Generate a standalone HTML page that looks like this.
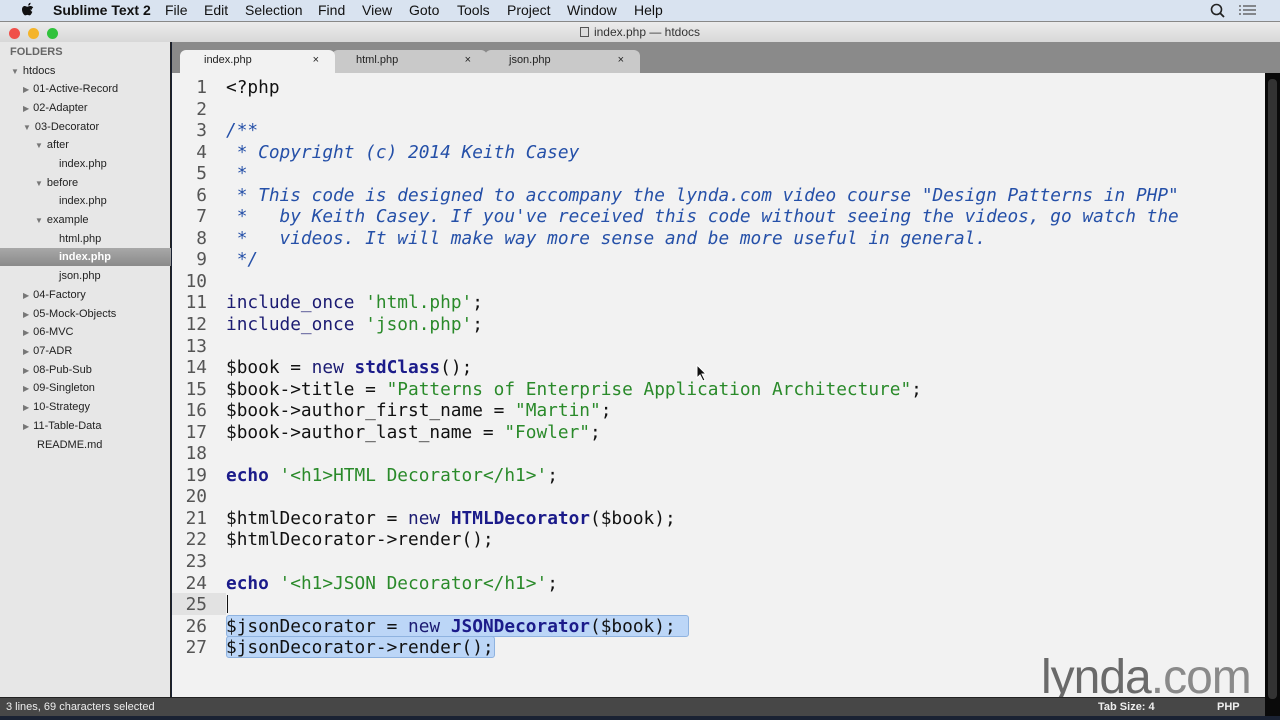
<!DOCTYPE html>
<html><head><meta charset="utf-8"><style>
*{margin:0;padding:0;box-sizing:border-box}
body{width:1280px;height:720px;overflow:hidden;background:#1a2233;font-family:"Liberation Sans",sans-serif;position:relative}
#menu{position:absolute;left:0;top:0;width:1280px;height:21px;background:#d9e3f0;font-size:14px;color:#111}
#menu span{position:absolute;top:2px}
#title{position:absolute;left:0;top:21px;width:1280px;height:21px;background:linear-gradient(#ececec,#d8d8d8);border-top:1px solid #888;font-size:12px;color:#333;text-align:center;line-height:21px}
.dot{position:absolute;top:6px;width:11px;height:11px;border-radius:50%}
#side{position:absolute;left:0;top:42px;width:171px;height:655px;background:#e7e7e7;border-right:1px solid #222;font-size:11px;color:#222}
#side div{position:absolute;height:18.7px;line-height:20px;white-space:nowrap}
.tri{color:#777;font-size:8px;margin-right:4px}
#tabs{position:absolute;left:172px;top:42px;width:1108px;height:31px;background:#8a8a8a}
.tab{position:absolute;top:8px;height:23px;width:155px;border-radius:6px 6px 0 0;font-size:11px;line-height:20px;padding-left:24px;color:#222}
.tab b{position:absolute;right:16px;font-weight:normal;font-size:11px}
#ed{position:absolute;left:172px;top:73px;width:1093px;height:624px;background:#f2f2f2}
#scroll{position:absolute;left:1265px;top:73px;width:15px;height:643px;background:#0a0a0a}
#scroll i{position:absolute;left:3px;top:6px;width:9px;height:620px;background:#333;border-radius:4px}
.ln{position:absolute;left:176px;width:31px;text-align:right;font:17.8px/21.55px "DejaVu Sans Mono",monospace;color:#555}
.cd{position:absolute;left:226px;font:17.8px/21.55px "DejaVu Sans Mono",monospace;color:#111;white-space:pre}
.c{color:#2550a8;font-style:italic}.s{color:#2a8a2a}.k{color:#1b1b72}.b{color:#1b1b8a;font-weight:bold}
#status{position:absolute;left:0;top:697px;width:1265px;height:19px;background:#474747;border-top:1px solid #222;color:#eee;font-size:11px;line-height:19px}
.sel{position:absolute;background:#bcd6f7;border:1px solid #8fb3e0;border-radius:3px}
</style></head><body>
<div id="menu">
<svg style="position:absolute;left:21px;top:2px" width="14" height="16" viewBox="0 0 14 16"><path d="M10.5 8.5c0-2 1.6-2.9 1.7-3-1-1.4-2.4-1.5-2.9-1.5-1.2-.1-2.4.7-3 .7s-1.6-.7-2.6-.7C2.400 4 1 5.200 1 7.600c0 1.500.6 3.100 1.300 4.100.6.900 1.200 1.700 2 1.700s1.100-.5 2.100-.5 1.300.5 2.100.5 1.400-.9 1.900-1.700c.6-.9.9-1.800.9-1.900 0 0-1.800-.7-1.800-2.800zM9 2.700C9.400 2.200 9.700 1.500 9.600.8c-.6 0-1.400.4-1.800.9-.4.400-.7 1.200-.6 1.800.7.1 1.400-.3 1.800-.8z" fill="#111"/></svg>
<span style="left:53px;font-weight:bold">Sublime Text 2</span>
<span style="left:165px">File</span><span style="left:204px">Edit</span><span style="left:245px">Selection</span>
<span style="left:318px">Find</span><span style="left:362px">View</span><span style="left:409px">Goto</span>
<span style="left:457px">Tools</span><span style="left:507px">Project</span><span style="left:567px">Window</span><span style="left:634px">Help</span>
<svg style="position:absolute;left:1210px;top:3px" width="16" height="16"><circle cx="6.5" cy="6.5" r="5" fill="none" stroke="#222" stroke-width="1.6"/><line x1="10" y1="10" x2="14" y2="14" stroke="#222" stroke-width="1.8"/></svg>
<svg style="position:absolute;left:1239px;top:4px" width="18" height="12"><g stroke="#555" stroke-width="1.3"><line x1="4" y1="2" x2="17" y2="2"/><line x1="4" y1="6" x2="17" y2="6"/><line x1="4" y1="10" x2="17" y2="10"/><line x1="0" y1="2" x2="2" y2="2"/><line x1="0" y1="6" x2="2" y2="6"/><line x1="0" y1="10" x2="2" y2="10"/></g></svg>
</div>
<div id="title">
<div class="dot" style="left:9px;background:#f0504a"></div><div class="dot" style="left:28px;background:#f4b42a"></div><div class="dot" style="left:47px;background:#30c23c"></div>
<span style="display:inline-block;width:9px;height:10px;border:1px solid #555;background:#ddd;vertical-align:-1px;margin-right:5px"></span>index.php — htdocs</div>
<div id="side">
<div style="left:10px;top:0;font-weight:bold;color:#666">FOLDERS</div>
<div style="left:11px;top:18.5px"><span class="tri">▼</span>htdocs</div>
<div style="left:23px;top:37.2px"><span class="tri">▶</span>01-Active-Record</div>
<div style="left:23px;top:55.9px"><span class="tri">▶</span>02-Adapter</div>
<div style="left:23px;top:74.6px"><span class="tri">▼</span>03-Decorator</div>
<div style="left:35px;top:93.3px"><span class="tri">▼</span>after</div>
<div style="left:59px;top:112px">index.php</div>
<div style="left:35px;top:130.7px"><span class="tri">▼</span>before</div>
<div style="left:59px;top:149.4px">index.php</div>
<div style="left:35px;top:168.1px"><span class="tri">▼</span>example</div>
<div style="left:59px;top:186.8px">html.php</div>
<div style="left:0;top:206px;width:171px;height:18px;line-height:19px;background:linear-gradient(#a8a8a8,#8a8a8a);color:#fff;padding-left:59px;font-weight:bold">index.php</div>
<div style="left:59px;top:224.2px">json.php</div>
<div style="left:23px;top:242.9px"><span class="tri">▶</span>04-Factory</div>
<div style="left:23px;top:261.6px"><span class="tri">▶</span>05-Mock-Objects</div>
<div style="left:23px;top:280.3px"><span class="tri">▶</span>06-MVC</div>
<div style="left:23px;top:299px"><span class="tri">▶</span>07-ADR</div>
<div style="left:23px;top:317.7px"><span class="tri">▶</span>08-Pub-Sub</div>
<div style="left:23px;top:336.4px"><span class="tri">▶</span>09-Singleton</div>
<div style="left:23px;top:355.1px"><span class="tri">▶</span>10-Strategy</div>
<div style="left:23px;top:373.8px"><span class="tri">▶</span>11-Table-Data</div>
<div style="left:37px;top:392.5px">README.md</div>
</div>
<div id="tabs">
<div class="tab" style="left:313px;background:#c9c9c9">json.php<b>×</b></div>
<div class="tab" style="left:160px;background:#c9c9c9">html.php<b>×</b></div>
<div class="tab" style="left:8px;background:#f2f2f2">index.php<b>×</b></div>
</div>
<div id="ed"></div>
<div class="sel" style="left:226px;top:615px;width:463px;height:22px"></div>
<div class="sel" style="left:226px;top:636px;width:269px;height:22px"></div>
<div style="position:absolute;left:172px;top:593px;width:54px;height:22px;background:#e2e2e2"></div>
<div style="position:absolute;left:227px;top:595px;width:1px;height:18px;background:#111"></div>
<div class="ln" style="top:77px">1<br>2<br>3<br>4<br>5<br>6<br>7<br>8<br>9<br>10<br>11<br>12<br>13<br>14<br>15<br>16<br>17<br>18<br>19<br>20<br>21<br>22<br>23<br>24<br>25<br>26<br>27</div>
<div class="cd" style="top:77px">&lt;?php

<span class="c">/**
 * Copyright (c) 2014 Keith Casey
 *
 * This code is designed to accompany the lynda.com video course "Design Patterns in PHP"
 *   by Keith Casey. If you've received this code without seeing the videos, go watch the
 *   videos. It will make way more sense and be more useful in general.
 */</span>

<span class="k">include_once</span> <span class="s">'html.php'</span>;
<span class="k">include_once</span> <span class="s">'json.php'</span>;

$book = <span class="k">new</span> <span class="b">stdClass</span>();
$book-&gt;title = <span class="s">"Patterns of Enterprise Application Architecture"</span>;
$book-&gt;author_first_name = <span class="s">"Martin"</span>;
$book-&gt;author_last_name = <span class="s">"Fowler"</span>;

<span class="b">echo</span> <span class="s">'&lt;h1&gt;HTML Decorator&lt;/h1&gt;'</span>;

$htmlDecorator = <span class="k">new</span> <span class="b">HTMLDecorator</span>($book);
$htmlDecorator-&gt;render();

<span class="b">echo</span> <span class="s">'&lt;h1&gt;JSON Decorator&lt;/h1&gt;'</span>;

$jsonDecorator = <span class="k">new</span> <span class="b">JSONDecorator</span>($book);
$jsonDecorator-&gt;render();</div>
<svg style="position:absolute;left:696px;top:364px" width="12" height="18"><path d="M1 1 L1 14 L4 11 L7 17 L9 16 L6 10 L10 10 Z" fill="#111" stroke="#fff" stroke-width="1"/></svg>
<div style="position:absolute;left:1041px;top:650px;font-size:48px;letter-spacing:-1px;font-family:'Liberation Sans',sans-serif"><span style="color:#6a6a6a">lynda</span><span style="color:#8a8a8a">.com</span></div>
<div id="scroll"><i></i></div>
<div id="status"><span style="position:absolute;left:6px">3 lines, 69 characters selected</span><span style="position:absolute;left:1098px;font-weight:bold">Tab Size: 4</span><span style="position:absolute;left:1217px;font-weight:bold">PHP</span></div>
</body></html>
